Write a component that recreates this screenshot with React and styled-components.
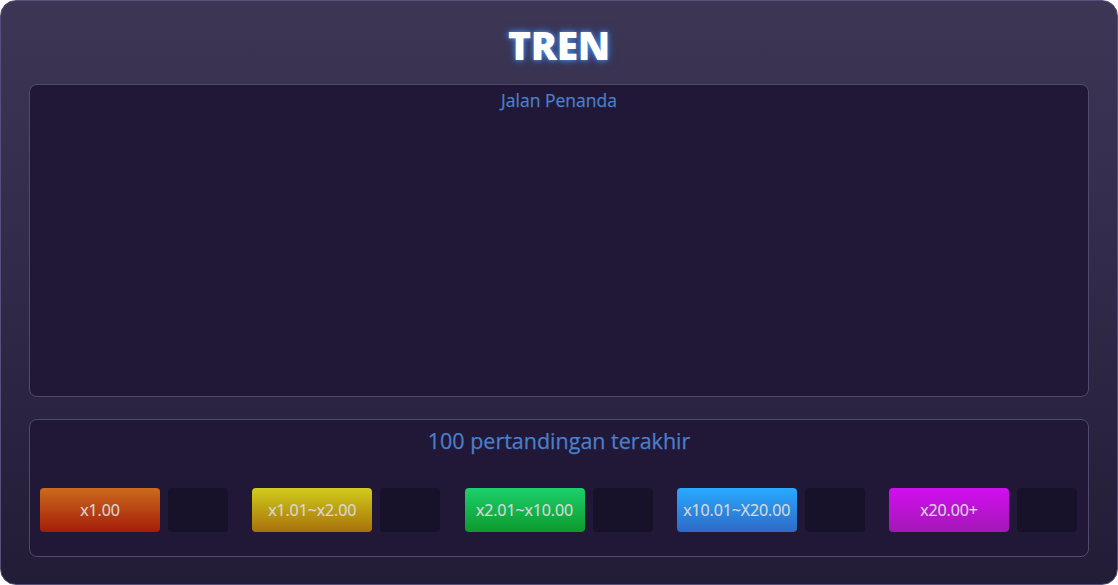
import React from 'react'
import styled, { createGlobalStyle } from 'styled-components'

const GlobalStyle = createGlobalStyle`
    html, body {
        margin: 0;
        padding: 0;
        background: #ffffff;
    }
    * {
        box-sizing: border-box;
    }
`;

const Container = styled.div`
    width: 1118px;
    height: 585px;
    border-radius: 16px;
    border: 1px solid #57507a;
    background: linear-gradient(180deg, #3d3655 0%, #302a48 50%, #221c36 100%);
    padding: 0 28px 27px;
    display: flex;
    flex-direction: column;
    font-family: "Open Sans", "Noto Sans", sans-serif;
`;

const Title = styled.h1`
    margin: 0;
    height: 83px;
    display: flex;
    align-items: center;
    justify-content: center;
    font-family: "Open Sans", "Noto Sans", sans-serif;
    font-weight: 800;
    font-size: 39px;
    letter-spacing: -0.3px;
    color: #ffffff;
    text-shadow: 0 0 4px #4f8ee0, 0 0 9px #3a6fc8;
    padding-top: 4px;
`;

const Panel = styled.div`
    border: 1px solid #514a6c;
    border-radius: 8px;
    background: #201836;
    display: flex;
    flex-direction: column;
    align-items: center;
`;

const MarkerPanel = styled(Panel)`
    height: 313px;
`;

const RecentPanel = styled(Panel)`
    margin-top: 22px;
    flex: 1;
`;

const PanelTitle = styled.div`
    color: #4a7fcb;
    font-size: ${props => props.size}px;
    line-height: 1;
    margin-top: ${props => props.top}px;
    -webkit-text-stroke: 0.25px #4a7fcb;
`;

const Legend = styled.div`
    width: 100%;
    display: flex;
    justify-content: space-between;
    padding: 0 11px 0 10px;
    margin-top: 36px;
`;

const Group = styled.div`
    display: flex;
    gap: 8px;
`;

const Range = styled.div`
    width: 120px;
    height: 44px;
    border-radius: 4px;
    background: linear-gradient(180deg, ${props => props.from}, ${props => props.to});
    color: #d9d9d9;
    font-size: 16px;
    display: flex;
    align-items: center;
    justify-content: center;
    letter-spacing: -0.1px;
    -webkit-text-stroke: 0.2px #d9d9d9;
`;

const Count = styled.div`
    width: 60px;
    height: 44px;
    border-radius: 4px;
    background: #17122a;
`;

const ranges = [
    { label: 'x1.00', from: '#cb6a1d', to: '#a51d09' },
    { label: 'x1.01~x2.00', from: '#d0cc1c', to: '#a8710a' },
    { label: 'x2.01~x10.00', from: '#1cd06c', to: '#0c9a2c' },
    { label: 'x10.01~X20.00', from: '#28aaff', to: '#2f69c6' },
    { label: 'x20.00+', from: '#d20ef0', to: '#a318b6' },
];

const App = () => {
    return (
        <>
            <GlobalStyle />
            <Container>
                <Title>TREN</Title>
                <MarkerPanel>
                    <PanelTitle size={17.5} top={7}>Jalan Penanda</PanelTitle>
                </MarkerPanel>
                <RecentPanel>
                    <PanelTitle size={21.5} top={10}>100 pertandingan terakhir</PanelTitle>
                    <Legend>
                        {ranges.map(r => (
                            <Group key={r.label}>
                                <Range from={r.from} to={r.to}>{r.label}</Range>
                                <Count />
                            </Group>
                        ))}
                    </Legend>
                </RecentPanel>
            </Container>
        </>
    )
}

export default App
